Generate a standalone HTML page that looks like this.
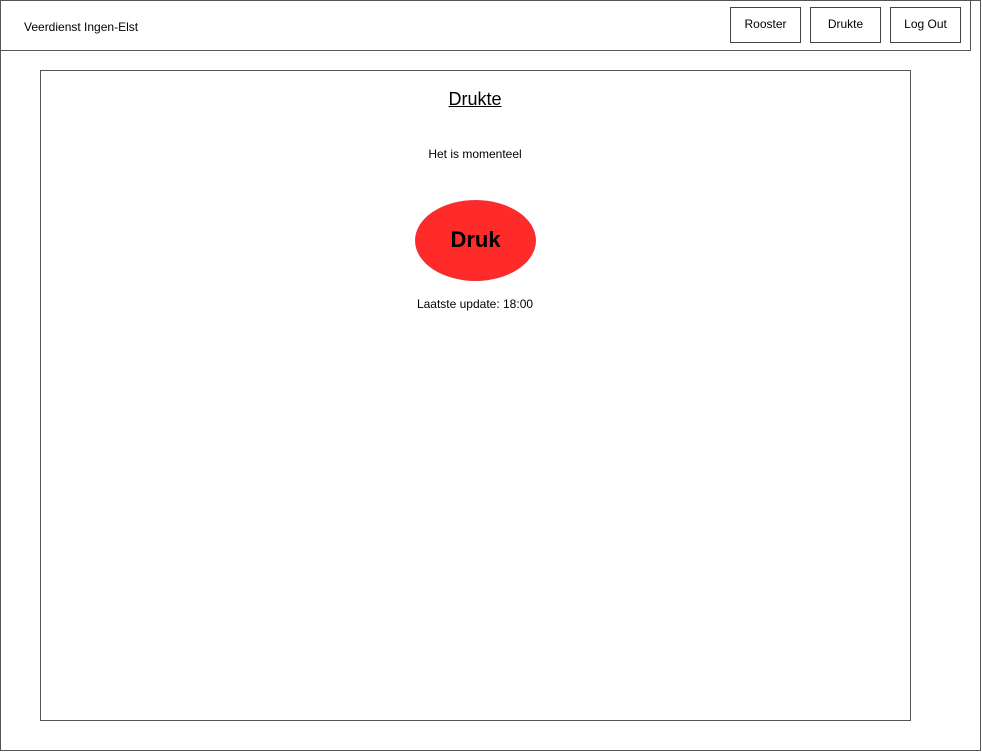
<!DOCTYPE html>
<html><head><meta charset="utf-8"><style>
body{margin:0;width:982px;height:752px;background:#fff;position:relative;overflow:hidden;font-family:"Liberation Sans",Helvetica,Arial,sans-serif;color:#000}
.b{position:absolute;border:1px solid #555;box-sizing:border-box}
.t{position:absolute;font-size:12px;white-space:nowrap}
.btn{position:absolute;border:1px solid #444;box-sizing:border-box;font-size:12px;text-align:center;top:7px;width:71px;height:36px;line-height:32px}
</style></head><body>
<div class="b" style="left:0;top:0;width:981px;height:751px"></div>
<div class="b" style="left:0;top:0;width:971px;height:51px;background:#fff"></div>
<div class="t" style="left:24px;top:20px">Veerdienst Ingen-Elst</div>
<div class="btn" style="left:730px">Rooster</div>
<div class="btn" style="left:810px">Drukte</div>
<div class="btn" style="left:890px">Log Out</div>
<div class="b" style="left:40px;top:70px;width:871px;height:651px"></div>
<div class="t" style="left:0;width:950px;text-align:center;top:89px;font-size:18px;text-decoration:underline">Drukte</div>
<div class="t" style="left:0;width:950px;text-align:center;top:147px">Het is momenteel</div>
<div style="position:absolute;left:415px;top:200px;width:121px;height:81px;border-radius:50%;background:#ff2a2a;box-sizing:border-box;border:1px solid #e33;text-align:center;line-height:78px;font-size:22px;font-weight:bold">Druk</div>
<div class="t" style="left:0;width:950px;text-align:center;top:297px">Laatste update: 18:00</div>
</body></html>
